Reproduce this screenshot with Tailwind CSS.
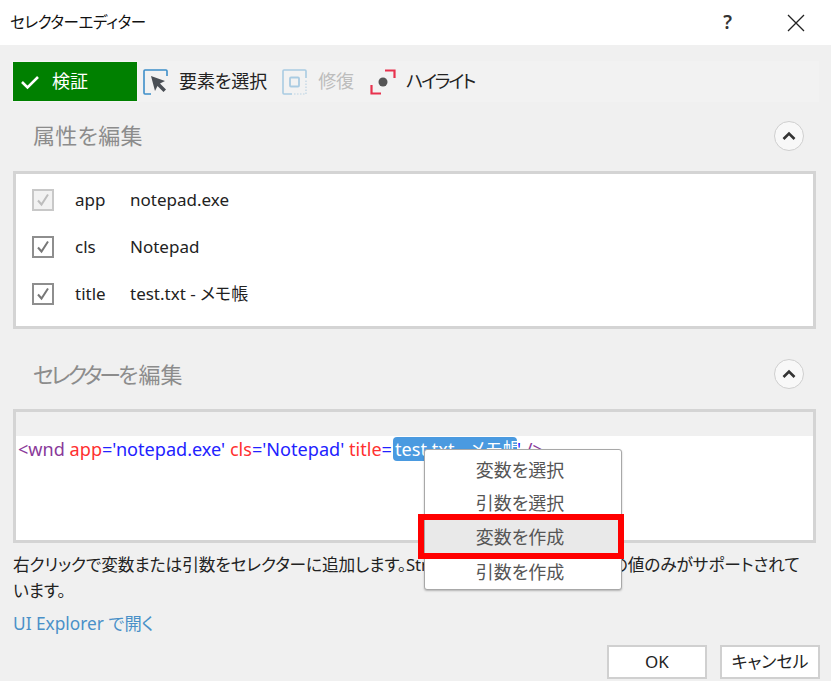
<!DOCTYPE html>
<html lang="ja">
<head>
    <meta charset="UTF-8">
    <title>セレクターエディター</title>
    <script src="https://cdn.jsdelivr.net/npm/@tailwindcss/browser@4"></script>
</head>
<body class="bg-[#f0f0f0] overflow-hidden">
<div class="relative w-[831px] h-[681px] flex flex-col text-[#222] font-['Noto_Sans','Noto_Sans_CJK_JP',sans-serif] [font-feature-settings:'palt'] text-[17px]">

    <!-- title bar -->
    <header class="h-[45px] shrink-0 bg-white flex items-center pl-[10px] pr-[26px]">
        <h1 class="text-[15.5px] text-[#111] flex-1 tracking-[-0.4px]">セレクターエディター</h1>
        <span class="text-[19px] font-semibold text-[#333] mr-[55px]">?</span>
        <svg class="w-[18px] h-[18px]" viewBox="0 0 18 18" fill="none" stroke="#222" stroke-width="1.3"><path d="M1 1l16 16M17 1L1 17"/></svg>
    </header>

    <!-- toolbar -->
    <div class="h-[41px] mt-[16px] ml-[12px] mr-[12px] shrink-0 flex items-center bg-[#f2f2f2]">
        <button class="w-[126px] h-[41px] bg-[#008000] border border-[#f5f5f5] text-white flex items-center pl-[7px]">
            <svg class="w-[20px] h-[16px]" viewBox="0 0 20 16" fill="none" stroke="white" stroke-width="2.6"><path d="M2 8l5.5 5.5L18 3"/></svg>
            <span class="ml-[12px] text-[18px]">検証</span>
        </button>
        <svg class="w-[25px] h-[26px] ml-[5px]" viewBox="0 0 25 26" fill="none">
            <path d="M8 25H2a1 1 0 0 1-1-1V2a1 1 0 0 1 1-1h21a1 1 0 0 1 1 1v5" stroke="#3d8ec9" stroke-width="1.6"/>
            <path d="M8 7l14 5-5 2.5 6 6-2.5 2.5-6-6L12 22z" fill="#4a4f55"/>
        </svg>
        <span class="ml-[11px] text-[18px] tracking-[-0.1px]">要素を選択</span>
        <svg class="w-[25px] h-[26px] ml-[15px]" viewBox="0 0 25 26" fill="none">
            <path d="M24 9V2a1 1 0 0 0-1-1H2a1 1 0 0 0-1 1v22a1 1 0 0 0 1 1h8" stroke="#a9cbe2" stroke-width="1.6"/>
            <path d="M12 25h12V11" stroke="#bcd3e3" stroke-width="1.2" stroke-dasharray="1.5 1.5"/>
            <rect x="8" y="8.5" width="9" height="9" rx="1" stroke="#a9cbe2" stroke-width="1.8"/>
        </svg>
        <span class="ml-[11px] text-[18px] text-[#bdbdbd]">修復</span>
        <svg class="w-[26px] h-[26px] ml-[16px]" viewBox="0 0 26 26" fill="none">
            <path d="M15 1.5h9.5V9M1.5 16v8.5H11" stroke="#e8324e" stroke-width="2.2"/>
            <circle cx="13" cy="13" r="4.5" fill="#555"/>
        </svg>
        <span class="ml-[10px] text-[18px] tracking-[-2px]">ハイライト</span>
    </div>

    <!-- attributes section -->
    <div class="flex items-center justify-between h-[30px] mt-[19px] pl-[33px] pr-[27px] shrink-0">
        <h2 class="text-[22px] text-[#8c8c8c] -mt-[2px] tracking-[0.3px]">属性を編集</h2>
        <button class="w-[30px] h-[30px] rounded-full border border-[#cfcfcf] bg-[#f8f8f8] flex items-center justify-center">
            <svg class="w-[14px] h-[10px]" viewBox="0 0 14 10" fill="none" stroke="#333" stroke-width="2.6"><path d="M1.5 8L7 2.5 12.5 8"/></svg>
        </button>
    </div>
    <div class="h-[158px] ml-[13px] mr-[15px] mt-[20px] shrink-0 bg-white border-[3px] border-[#d4d4d4] pl-[16px] pt-[15px] flex flex-col gap-[25px]">
        <div class="flex items-center h-[22px]">
            <span class="w-[22px] h-[22px] border-2 border-[#c8c8c8] bg-[#f2f2f2] flex items-center justify-center">
                <svg class="w-[14px] h-[14px]" viewBox="0 0 14 14" fill="none" stroke="#bdbdbd" stroke-width="2"><path d="M2 7.5l3.5 4L12 1.5"/></svg>
            </span>
            <span class="w-[55px] ml-[21px]">app</span>
            <span>notepad.exe</span>
        </div>
        <div class="flex items-center h-[22px]">
            <span class="w-[22px] h-[22px] border-2 border-[#8e8e8e] bg-white flex items-center justify-center">
                <svg class="w-[14px] h-[14px]" viewBox="0 0 14 14" fill="none" stroke="#777" stroke-width="2"><path d="M2 7.5l3.5 4L12 1.5"/></svg>
            </span>
            <span class="w-[55px] ml-[21px]">cls</span>
            <span>Notepad</span>
        </div>
        <div class="flex items-center h-[22px]">
            <span class="w-[22px] h-[22px] border-2 border-[#8e8e8e] bg-white flex items-center justify-center">
                <svg class="w-[14px] h-[14px]" viewBox="0 0 14 14" fill="none" stroke="#777" stroke-width="2"><path d="M2 7.5l3.5 4L12 1.5"/></svg>
            </span>
            <span class="w-[55px] ml-[21px]">title</span>
            <span>test.txt - メモ帳</span>
        </div>
    </div>

    <!-- selector section -->
    <div class="flex items-center justify-between h-[30px] mt-[30px] pl-[33px] pr-[27px] shrink-0">
        <h2 class="text-[22px] text-[#8c8c8c]"><span class="tracking-[-3px]">セレクター</span>を編集</h2>
        <button class="w-[30px] h-[30px] rounded-full border border-[#cfcfcf] bg-[#f8f8f8] flex items-center justify-center">
            <svg class="w-[14px] h-[10px]" viewBox="0 0 14 10" fill="none" stroke="#333" stroke-width="2.6"><path d="M1.5 8L7 2.5 12.5 8"/></svg>
        </button>
    </div>
    <div class="h-[134px] ml-[13px] mr-[15px] mt-[20px] shrink-0 border-[3px] border-[#d4d4d4] flex flex-col">
        <div class="h-[24px] bg-[#f0f0f0] shrink-0"></div>
        <div class="flex-1 bg-white pl-[2px] pt-[1px] text-[18.1px] leading-[24px] whitespace-nowrap">
            <span class="text-[#8a3a9a]">&lt;wnd</span>
            <span class="text-[#ff3030]">app</span><span class="text-[#2222ff]">='notepad.exe'</span>
            <span class="text-[#ff3030]">cls</span><span class="text-[#2222ff]">='Notepad'</span>
            <span class="text-[#ff3030]">title</span><span class="text-[#2222ff]">='</span><span class="bg-[#4a9ae0] text-white rounded-[4px] inline-block w-[124px] leading-[24px] -ml-[3px] pl-[2px]">test.txt - メモ帳</span><span class="text-[#2222ff]">'</span>
            <span class="text-[#8a3a9a]">/&gt;</span>
        </div>
    </div>

    <!-- hint and link -->
    <p class="ml-[13px] mt-[9px] text-[16.7px] leading-[26px] tracking-[-0.1px] text-[#222] whitespace-nowrap shrink-0">右クリックで変数または引数をセレクターに追加します。String 型 の 変数または引数の値のみがサポートされて<br>います。</p>
    <a class="ml-[13px] mt-[7px] text-[17.3px] leading-[26px] text-[#4a90c8] shrink-0">UI Explorer で開く</a>

    <!-- footer buttons -->
    <div class="flex justify-end gap-[13px] pr-[11px] mt-[8px] shrink-0">
        <button class="w-[100px] h-[34px] bg-white border-2 border-[#d0d0d0] text-[17px] text-[#222]">OK</button>
        <button class="w-[100px] h-[34px] bg-white border-2 border-[#d0d0d0] text-[17px] text-[#222]">キャンセル</button>
    </div>

    <!-- context menu -->
    <div class="absolute left-[424px] top-[449px] w-[198px] h-[141px] bg-white border border-[#a8a8a8] rounded-[3px] shadow-[0_1px_2px_rgba(0,0,0,0.25)] text-[18px] text-[#555] text-center pr-[6px] flex flex-col">
        <div class="h-[35px] leading-[40px]">変数を選択</div>
        <div class="h-[34px] leading-[37px]">引数を選択</div>
        <div class="h-[34px] leading-[36px] bg-[#e9e9e9] -mr-[6px] pr-[6px]">変数を作成</div>
        <div class="h-[34px] leading-[38px]">引数を作成</div>
    </div>
    <!-- red callout -->
    <div class="absolute left-[418px] top-[514px] w-[206px] h-[45px] border-[6px] border-[#ff0000]"></div>
</div>
</body>
</html>
